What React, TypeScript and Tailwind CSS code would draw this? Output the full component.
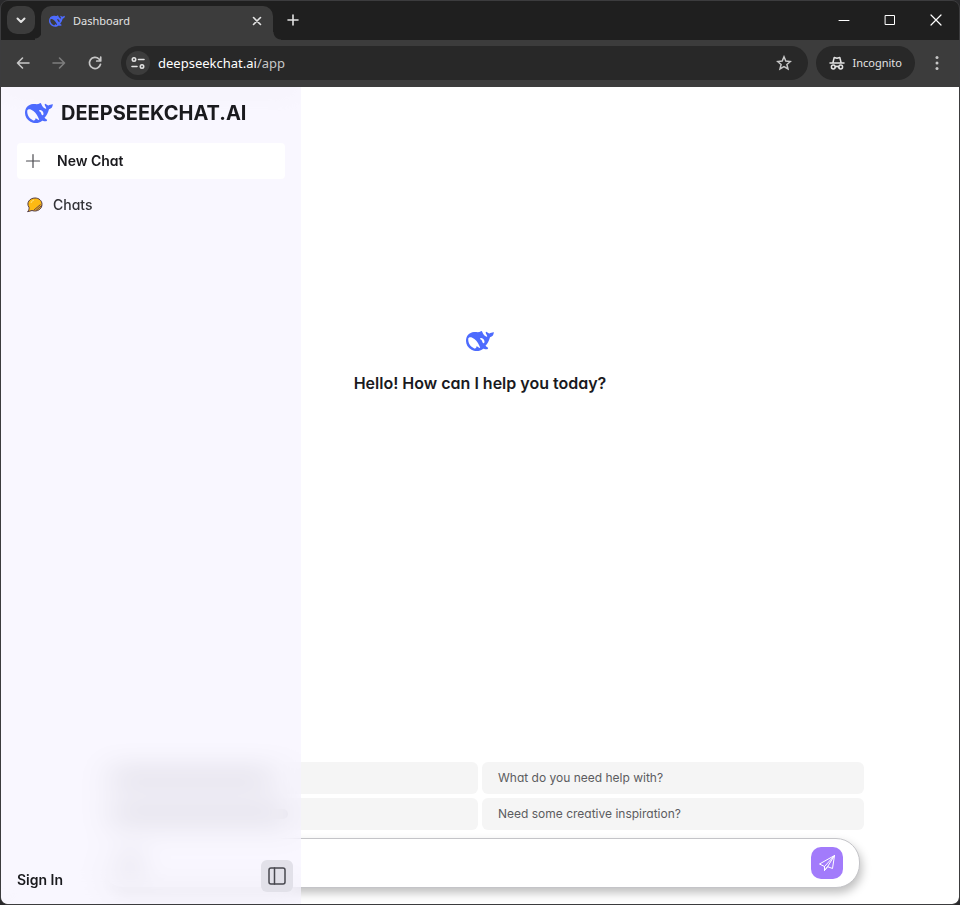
import type { ReactNode } from "react";

const icon = {
  fill: "none",
  stroke: "currentColor",
  strokeLinecap: "round" as const,
  strokeLinejoin: "round" as const,
  "aria-hidden": true,
};

function Whale({ className }: { className: string }) {
  return (
    <svg viewBox="0 0 56 42" className={className} aria-hidden="true">
      <path
        fill="#4d6bfe"
        fillRule="evenodd"
        d="M0 21C0 11 6 4 16 3C20 2.600 24 4.500 28.500 2.500C29.500 2 29.500 .500 31 1C33.500 2.500 33 6 36 9C38 11 40.500 12 42 13C43.500 10.500 41 9 40 6.500C39.400 4.800 39 3 40.500 2.500C43 3.500 44.500 5.500 47 6C49 4.500 52 4.500 55.500 3C56 8 53 12.500 48 13.500C46 20 43.500 26 39 30.500C40 32 42 33 44 34.500C45 36.500 43 38 40 37.600C37.500 37.500 36 36.800 34.500 36.600C28 42 18 42.500 11 38.500C4 34.500 0 28 0 21ZM4.500 16.500C4 25 8.500 32 16.500 35.800C19.500 36.800 21 34.500 21 31.500C23 32 24.500 34 27.500 35C29.500 35 27.500 32.500 26.500 30C23.500 23 18.500 17 12.500 14.500C8 12.800 5 14 4.500 16.500ZM28.500 15.500C27 17 31 18.500 32 20.500C32.700 23 33.500 26 36 25.500C38 23.500 37 19 34 16.500C32 14.800 29.800 14.300 28.500 15.500Z"
      />
    </svg>
  );
}

function ToolButton({ label, className = "", children }: { label: string; className?: string; children: ReactNode }) {
  return (
    <button type="button" aria-label={label} className={`flex shrink-0 items-center justify-center ${className}`}>
      {children}
    </button>
  );
}

function TabStrip() {
  return (
    <div className="flex h-10 items-center bg-[#1f1f1f] pl-1.5 text-[#e3e3e3]">
      <ToolButton label="Search tabs" className="h-7 w-7 rounded-[10px] bg-[#3c3c3c]">
        <svg {...icon} viewBox="0 0 16 16" strokeWidth="2" className="h-4 w-4">
          <path d="M4.500 6.500 8 10l3.500-3.500" />
        </svg>
      </ToolButton>
      <div className="flex h-10 items-end">
        <div className="h-2 w-1.5 bg-[radial-gradient(circle_at_top_left,#1f1f1f_6px,#3c3c3c_7px)]" />
        <div className="mt-1.5 flex h-[34px] w-[232px] items-center rounded-t-[10px] bg-[#3c3c3c] pr-2 pb-1 pl-2">
          <Whale className="h-3.5 w-4" />
          <span className="ml-2 flex-1 text-[11px] leading-4">Dashboard</span>
          <ToolButton label="Close tab" className="h-4 w-4">
            <svg {...icon} viewBox="0 0 16 16" strokeWidth="1.600" className="h-4 w-4">
              <path d="m4.500 4.500 7 7m0-7-7 7" />
            </svg>
          </ToolButton>
        </div>
        <div className="h-2 w-2 bg-[radial-gradient(circle_at_top_right,#1f1f1f_7px,#3c3c3c_8px)]" />
      </div>
      <ToolButton label="New tab" className="ml-1 h-4 w-4">
        <svg {...icon} viewBox="0 0 16 16" strokeWidth="1.600" className="h-4 w-4">
          <path d="M8 3v10M3 8h10" />
        </svg>
      </ToolButton>
      <div className="ml-auto flex text-white">
        <ToolButton label="Minimize" className="h-10 w-[46px]">
          <svg {...icon} viewBox="0 0 12 12" className="h-3 w-3">
            <path d="M1 6.500h10" />
          </svg>
        </ToolButton>
        <ToolButton label="Maximize" className="h-10 w-[46px]">
          <svg {...icon} viewBox="0 0 12 12" className="h-3 w-3">
            <rect x="1.500" y="1.500" width="9" height="9" />
          </svg>
        </ToolButton>
        <ToolButton label="Close" className="h-10 w-[46px]">
          <svg {...icon} viewBox="0 0 12 12" strokeWidth="1.200" className="h-3 w-3">
            <path d="m1 1 10 10M11 1 1 11" />
          </svg>
        </ToolButton>
      </div>
    </div>
  );
}

function Toolbar() {
  return (
    <div className="flex h-[47px] items-center bg-[#3c3c3c] px-3.5 pb-0.5 text-[#c7c7c7]">
      <div className="flex gap-5">
        <ToolButton label="Back" className="h-4 w-4">
          <svg {...icon} viewBox="0 0 16 16" strokeWidth="1.600" className="h-4 w-4">
            <path d="M14 8H2.500M7.500 3l-5 5 5 5" />
          </svg>
        </ToolButton>
        <ToolButton label="Forward" className="h-4 w-4 text-[#7d7d7d]">
          <svg {...icon} viewBox="0 0 16 16" strokeWidth="1.600" className="h-4 w-4">
            <path d="M2 8h11.500M8.500 3l5 5-5 5" />
          </svg>
        </ToolButton>
        <ToolButton label="Reload" className="h-4 w-4">
          <svg {...icon} viewBox="0 0 16 16" strokeWidth="1.700" className="h-4 w-4">
            <path d="M13.500 9.300A5.600 5.600 0 1 1 12 4l1.500 1.600M13.700 2v4H9.700" />
          </svg>
        </ToolButton>
      </div>
      <div className="ml-[18px] flex h-[34px] min-w-0 flex-1 items-center rounded-full bg-[#282828] pr-4 pl-[5px]">
        <ToolButton label="Site information" className="h-6 w-6 rounded-full bg-[#3c3c3c] text-[#e3e3e3]">
          <svg {...icon} viewBox="0 0 16 16" strokeWidth="1.600" className="h-4 w-4">
            <circle cx="4" cy="4.500" r="1.700" />
            <path d="M8.500 4.500H14M2 11.500h5" />
            <circle cx="12" cy="11.500" r="1.700" />
          </svg>
        </ToolButton>
        <span className="ml-2 flex-1 text-[13px] leading-5 text-white">
          deepseekchat.ai<span className="text-[#c7c7c7]">/app</span>
        </span>
        <ToolButton label="Bookmark this page" className="h-4 w-4">
          <svg {...icon} viewBox="0 0 16 16" strokeWidth="1.500" strokeLinejoin="miter" className="h-4 w-4">
            <path d="m8 1.800 1.800 4.300 4.600.400-3.500 3 1.100 4.500L8 11.600 4 14l1.100-4.500-3.500-3 4.600-.400Z" />
          </svg>
        </ToolButton>
      </div>
      <div className="ml-2 flex h-[34px] items-center gap-2 rounded-full bg-[#282828] px-[13px] text-[#e3e3e3]">
        <svg {...icon} viewBox="0 0 16 16" strokeWidth="1.500" className="h-4 w-4">
          <path d="M4 7.200 5.200 2.500l2.800.700 2.800-.700L12 7.200M1 8h14M6.200 12c1-.700 2.600-.700 3.600 0" />
          <circle cx="4.300" cy="12" r="1.900" />
          <circle cx="11.700" cy="12" r="1.900" />
        </svg>
        <span className="text-[11px] leading-4">Incognito</span>
      </div>
      <ToolButton label="Menu" className="ml-3.5 h-4 w-4">
        <svg viewBox="0 0 16 16" fill="currentColor" className="h-4 w-4" aria-hidden="true">
          <circle cx="8" cy="2.500" r="1.500" />
          <circle cx="8" cy="8" r="1.500" />
          <circle cx="8" cy="13.500" r="1.500" />
        </svg>
      </ToolButton>
    </div>
  );
}

function Sidebar() {
  return (
    <aside className="absolute inset-y-0 left-0 flex w-[300px] flex-col bg-[#f5f2ff]/60 px-4 pb-3 text-[#1a1a1e] backdrop-blur-[14px]">
      <div className="flex h-[52px] items-center gap-2 pl-2">
        <Whale className="h-[22px] w-7" />
        <h1 className="text-[20px] leading-7 font-bold">DEEPSEEKCHAT.AI</h1>
      </div>
      <nav className="mt-1 flex flex-col gap-2 text-[14px] leading-5">
        <button type="button" className="flex h-9 items-center gap-4 rounded bg-white px-2 font-semibold">
          <svg {...icon} viewBox="0 0 16 16" strokeWidth="1.200" className="h-4 w-4 text-[#4b4b50]">
            <path d="M8 1.500v13M1.500 8h13" />
          </svg>
          New Chat
        </button>
        <button type="button" className="flex h-9 items-center gap-2.5 rounded px-2.5 font-medium text-[#333338]">
          <svg viewBox="0 0 16 16" className="h-4 w-4" aria-hidden="true">
            <path
              d="M2 10.300C-1 6 2.500 1 8 1c4 0 7 2.700 7 6.300 0 4-3.200 6.700-7.200 6.700-1 0-2-.200-2.800-.500L.600 14.700C1.800 13.400 2.200 12 2 10.300Z"
              fill="#fdb913"
              stroke="#513a46"
              strokeLinejoin="round"
            />
            <path d="m9 13.500 5.800-5.200M6.500 13.500 13.500 7.500" fill="none" stroke="#66434a" />
            <path d="M4 6c.400-1.600 1.600-2.600 3-3" fill="none" stroke="#ffe47c" />
          </svg>
          Chats
        </button>
      </nav>
      <div className="mt-auto flex items-end justify-between">
        <a href="#sign-in" className="text-[14px] leading-6 font-semibold">
          Sign In
        </a>
        <button
          type="button"
          aria-label="Toggle sidebar"
          className="-mr-2 flex h-8 w-8 items-center justify-center rounded-md bg-[#e2e1e9]"
        >
          <svg {...icon} viewBox="0 0 18 18" strokeWidth="1.500" className="h-[18px] w-[18px] text-[#48484f]">
            <rect x="1" y="1" width="16" height="16" rx="2" />
            <path d="M6.500 1v16" />
          </svg>
        </button>
      </div>
    </aside>
  );
}

function Suggestion({ label, placeholderWidth = "" }: { label?: string; placeholderWidth?: string }) {
  return (
    <button
      type="button"
      aria-label={label ?? "Suggestion"}
      className="flex h-8 items-center rounded-md bg-[#f5f5f5] px-4 text-left text-[12px] leading-4 text-[#5c5c60]"
    >
      {label ?? <span className={`h-2.5 rounded-full bg-[#9d9da3] ${placeholderWidth}`} />}
    </button>
  );
}

function Chat() {
  return (
    <main className="flex flex-1 flex-col items-center">
      <div className="flex flex-1 flex-col items-center pt-[243px]">
        <Whale className="h-[22px] w-7" />
        <h2 className="mt-[19px] text-[16px] leading-6 font-semibold text-[#1a1a1e]">
          Hello! How can I help you today?
        </h2>
      </div>
      <div className="w-full max-w-3xl pb-4">
        <div className="grid grid-cols-2 gap-1">
          <Suggestion placeholderWidth="w-40" />
          <Suggestion label="What do you need help with?" />
          <Suggestion placeholderWidth="w-44" />
          <Suggestion label="Need some creative inspiration?" />
        </div>
        <form
          className="mx-1 mt-2 flex h-[50px] items-center rounded-3xl border border-[#c4c4c8] bg-white pr-4 pl-5 shadow-[2px_5px_10px_rgba(0,0,0,0.25)]"
          onSubmit={(event) => event.preventDefault()}
        >
          <span className="h-5 w-5 rounded-full bg-[#b5b5ba]" />
          <input type="text" aria-label="Message" className="h-8 min-w-0 flex-1 px-2 text-[14px] outline-none" />
          <button
            type="submit"
            aria-label="Send"
            className="flex h-8 w-8 items-center justify-center rounded-[10px] bg-[#a27bfb] text-white"
          >
            <svg {...icon} viewBox="0 0 18 18" strokeWidth="1" className="h-[18px] w-[18px]">
              <path d="M16.500 1.500 1.500 10l5 2.500L16.500 1.500 14.500 14.500l-4.500-1.700M6.500 12.500v4l3-3.700M16.500 1.500 9.500 12.800l-3 3.700" />
            </svg>
          </button>
        </form>
      </div>
    </main>
  );
}

export default function App() {
  return (
    <div className="flex min-h-screen flex-col bg-[#29292b] font-['Noto_Sans',sans-serif]">
      <div className="flex flex-1 flex-col overflow-hidden rounded-lg border border-[#3c3c3e] bg-[#3c3c3c]">
        <div className="-mt-px">
          <TabStrip />
          <Toolbar />
        </div>
        <div className="relative flex flex-1 flex-col overflow-hidden rounded-b-md bg-white font-['Inter',sans-serif] [font-feature-settings:'cv11']">
          <Chat />
          <Sidebar />
        </div>
      </div>
    </div>
  );
}
